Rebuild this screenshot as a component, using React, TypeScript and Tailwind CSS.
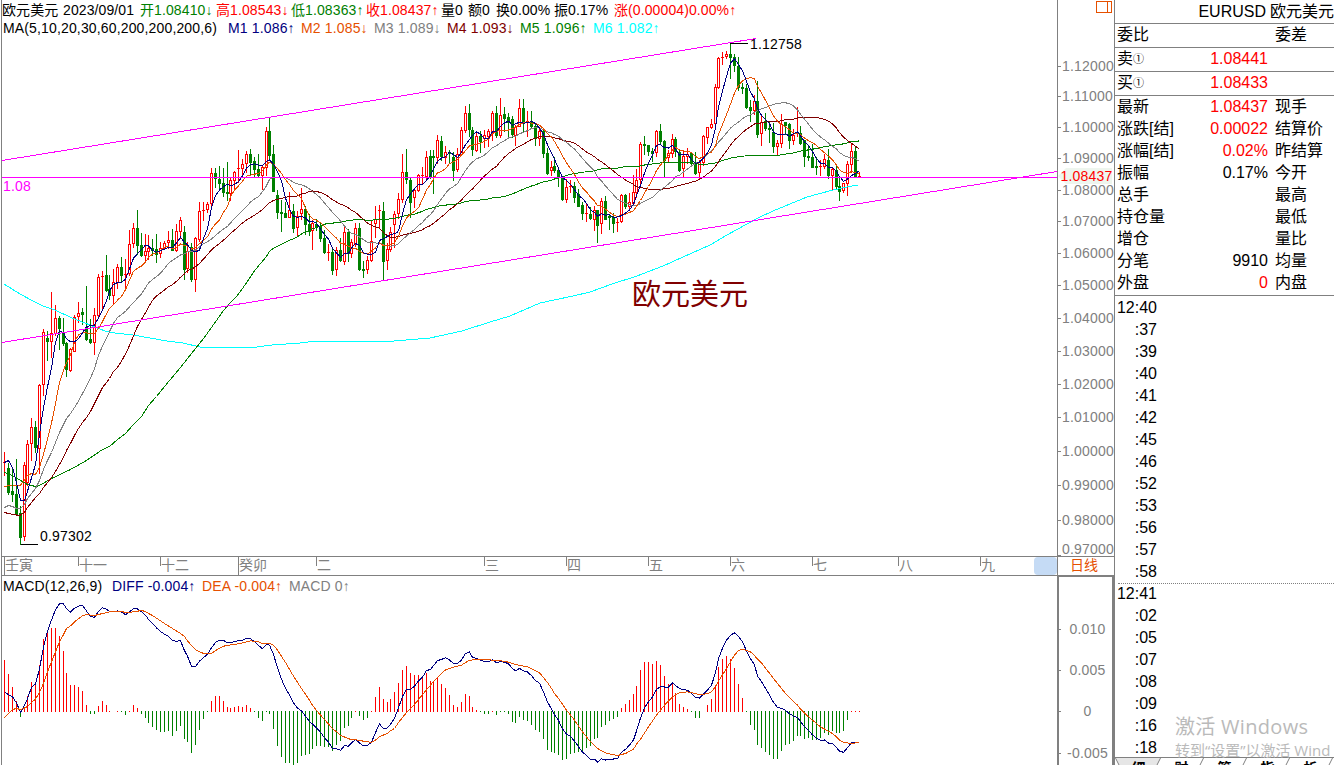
import React from 'react';

// [open, high, low, close] in chart rows, smaller = higher price
const CANDLES: number[][] = [
  [463,452,475,462],[468,463,494,492],[491,468,501,494],[494,459,514,514],[513,506,544,537],
  [536,462,540,465],[482,440,485,444],[443,418,460,427],[427,421,452,447],[448,384,473,385],
  [384,329,395,332],[338,331,360,341],[341,292,357,333],[333,305,335,318],[318,316,349,328],
  [332,318,345,343],[343,342,376,369],[370,348,371,349],[351,315,351,317],[316,302,322,313],
  [312,308,324,314],[327,286,340,339],[339,319,343,342],[342,308,354,315],[315,274,316,277],
  [277,271,309,276],[275,255,291,290],[289,275,299,295],[295,269,303,282],[282,264,288,267],
  [267,257,282,275],[275,259,287,274],[273,230,275,244],[243,223,247,228],[228,210,254,245],
  [245,233,256,255],[255,234,261,251],[251,235,259,248],[248,239,255,250],[249,234,262,254],
  [253,242,257,248],[248,241,249,243],[242,231,248,240],[240,229,250,250],[250,224,251,231],
  [231,217,238,220],[232,226,279,269],[268,242,272,251],[247,243,281,279],[279,237,291,238],
  [239,202,241,211],[211,202,220,210],[209,202,212,204],[203,168,205,173],[173,168,187,178],
  [179,166,188,183],[183,168,196,192],[192,162,200,193],[193,178,200,180],[180,171,188,172],
  [169,150,182,168],[168,159,177,164],[163,151,172,154],[154,149,174,162],[161,157,177,169],
  [169,154,177,175],[175,166,189,167],[167,127,175,131],[131,117,160,155],[154,145,191,191],
  [195,190,218,212],[212,200,231,213],[213,202,217,217],[217,192,217,210],[211,204,232,228],
  [227,211,235,216],[213,188,219,209],[209,206,234,224],[224,214,235,231],[230,220,249,223],
  [224,219,230,227],[226,222,241,238],[238,230,253,252],[253,244,260,252],[252,249,274,270],
  [269,247,275,250],[250,238,261,260],[261,225,264,232],[232,229,261,253],[253,239,257,242],
  [243,223,246,228],[228,223,270,269],[269,261,277,270],[269,256,273,260],[260,220,261,241],
  [223,206,237,219],[211,205,228,210],[211,202,280,261],[260,243,269,249],[249,227,251,232],
  [224,211,247,214],[213,193,218,199],[199,154,202,172],[172,149,183,179],[180,177,217,202],
  [197,189,207,190],[190,174,191,175],[176,167,183,175],[176,151,178,157],[156,150,178,177],
  [156,150,193,157],[157,135,163,140],[141,136,160,156],[157,146,163,152],[152,150,162,153],
  [157,152,180,170],[169,148,171,154],[154,127,155,130],[130,106,132,113],[113,104,136,129],
  [130,127,155,149],[150,133,151,136],[136,131,152,141],[138,130,147,135],[136,129,146,131],
  [132,111,140,113],[113,106,137,135],[135,98,137,115],[114,107,131,118],[117,113,138,122],
  [119,116,137,134],[135,125,145,127],[126,99,126,108],[108,99,131,122],[122,111,136,121],
  [121,111,127,126],[126,124,145,138],[138,128,145,131],[131,128,157,153],[153,148,174,173],
  [170,161,175,167],[166,157,172,170],[170,168,186,177],[177,176,200,199],[199,179,202,187],
  [187,180,192,186],[186,182,202,197],[194,189,206,206],[205,202,219,213],[214,204,221,213],
  [214,207,219,218],[219,206,230,210],[210,210,242,225],[223,198,233,201],[201,196,219,219],
  [216,214,229,217],[217,213,232,223],[223,218,231,222],[221,194,222,195],[195,194,208,206],
  [206,193,210,202],[203,175,204,192],[192,169,197,180],[179,142,183,144],[144,136,154,145],
  [145,145,155,151],[151,148,161,153],[152,130,156,131],[131,124,143,141],[141,140,176,160],
  [157,150,162,153],[153,134,157,139],[139,137,156,151],[152,149,171,170],[168,151,177,156],
  [156,148,163,154],[153,154,165,163],[164,152,174,173],[172,160,178,162],[162,135,165,136],
  [137,127,143,127],[127,119,128,124],[123,84,125,87],[87,57,88,58],[58,52,64,57],
  [56,51,58,54],[54,44,78,57],[57,54,71,65],[66,57,90,87],[87,83,93,88],
  [88,84,108,107],[107,100,121,110],[110,95,114,101],[101,81,137,134],[133,114,145,122],
  [121,113,130,128],[128,122,142,129],[132,123,152,146],[146,140,154,143],[143,114,147,124],
  [122,122,134,125],[124,123,148,140],[140,129,144,135],[134,107,136,133],[133,126,144,143],
  [140,140,166,156],[156,145,160,157],[157,144,167,167],[166,157,174,167],[167,160,175,166],
  [166,154,168,159],[160,149,178,175],[175,168,189,169],[170,165,189,186],[186,178,200,191],
  [190,183,192,183],[183,161,195,164],[164,144,172,151],[151,146,177,176],[177,172,177,176],
];

// moving averages; lead = the part that depends on history left of the screen
const AVERAGES: { n: number; color: string; lead: number[][] }[] = [
  { n: 60, color: '#008000', lead: [[0,472],[2,475],[4,480],[6,484],[8,486],[9,485],[12,478],[17,469],[21,460],[25,449],[27,446],[29,439],[31,433],[33,424],[35,416],[37,405],[39,396],[41,386],[45,367],[48,353],[51,338],[53,327],[56,310],[58,302]] },
  { n: 30, color: '#800000', lead: [[0,512],[1,513],[3,514.5],[4,514.5],[5,512],[6,507],[7,502],[8,497],[9,493],[10,487],[11,482],[12,477],[13,471],[14,464],[15,457],[16,450],[17,443],[18,435],[19,428],[20,422],[21,417],[22,411],[23,403],[24,395],[25,387],[26,382],[27,378],[28,371]] },
  { n: 20, color: '#808080', lead: [[0,507],[1,505],[2,506],[3,508],[4,508],[5,504],[6,498],[7,493],[8,488],[9,480],[10,469],[11,460],[12,452],[13,442],[14,432],[15,424],[16,418],[17,413],[18,407]] },
  { n: 10, color: '#e65000', lead: [[0,486],[2,484.5],[4,484.5],[5,480],[6,475],[7,473],[8,474]] },
  { n: 5, color: '#000080', lead: [[0,462],[1,460],[2,467],[3,482]] },
];

const MA200 = '4,284 20,294 33,301 43,306 55,310 72,318 85,323 95,327 105,331 115,333 133,335 150,338 167,341 183,343 200,347 257,347 272,345 300,343 316,341 394,341 430,338 462,331 490,322 510,316 540,303 573,296 590,292 612,284 637,276 663,266 683,257 710,245 727,235 747,224 760,217 773,211 790,204 807,197 833,190 847,187 858,185';

// histogram and DEA, three units per pixel row
const MACD = [
  157,113,76,33,-17,16,47,91,91,142,219,244,251,253,229,184,118,82,82,76,63,21,-10,-10,19,34,21,2,0,4,-4,-13,2,21,13,-8,
  -22,-35,-47,-58,-64,-64,-61,-74,-61,-44,-85,-92,-125,-101,-56,-25,-4,34,49,49,34,16,13,16,19,16,21,13,-2,-22,-31,-4,
  -10,-55,-106,-137,-155,-155,-161,-155,-134,-131,-128,-113,-104,-104,-109,-109,-121,-101,-91,-52,-44,-22,2,-15,-28,-22,2,
  46,76,40,31,40,61,88,126,139,116,110,112,104,116,94,94,102,85,73,52,21,16,31,55,49,16,7,-4,-10,-10,2,-13,-4,-4,-10,
  -32,-37,-19,-28,-31,-41,-58,-62,-85,-116,-124,-127,-131,-148,-143,-128,-125,-124,-122,-112,-106,-84,-82,-49,-43,-31,
  -25,-19,13,25,37,55,79,127,151,151,144,154,142,109,85,85,58,25,15,10,-3,-22,-22,0,22,40,82,136,159,169,160,133,85,43,
  -2,-41,-56,-101,-112,-122,-131,-143,-143,-119,-101,-98,-89,-74,-74,-83,-82,-88,-88,-82,-65,-71,-61,-65,-65,-59,-28,4,2,4,
];
const DEA = [
  [0,-19],[2,6],[3,9],[4,6],[6,15],[7,27],[8,37],[9,57],[10,84],[11,119],[12,149],[13,179],[14,209],[15,231],[16,249],
  [17,257],[18,269],[20,287],[21,291],[22,289],[23,288],[25,294],[27,299],[30,300],[31,297],[32,297],[35,303],[36,300],
  [38,288],[41,264],[45,234],[46,225],[49,185],[51,174],[53,174],[54,183],[56,196],[58,200],[60,203],[63,212],[65,209],
  [66,204],[68,204],[69,199],[70,184],[72,147],[74,106],[76,69],[78,34],[80,3],[82,-24],[84,-51],[86,-71],[88,-82],
  [90,-85],[94,-93],[95,-86],[96,-76],[98,-65],[100,-51],[101,-33],[103,-3],[105,21],[107,51],[109,79],[111,102],
  [113,125],[115,133],[117,139],[119,154],[122,156],[124,155],[127,152],[129,148],[131,141],[134,134],[137,116],[139,87],
  [140,69],[142,39],[144,4],[146,-26],[148,-61],[150,-91],[152,-111],[154,-124],[156,-130],[157,-132],[159,-126],
  [161,-113],[163,-83],[165,-46],[167,-11],[169,19],[171,43],[173,56],[175,59],[178,51],[180,53],[181,59],[183,91],
  [185,129],[187,169],[188,183],[189,187],[191,179],[194,146],[197,99],[200,54],[203,19],[206,-16],[209,-46],[212,-66],
  [214,-86],[215,-93],[217,-96],[219,-93],
];

const PRICES: [string, number][] = [
  ['1.12000', 66], ['1.11000', 96], ['1.10000', 127], ['1.09000', 158], ['1.08000', 190], ['1.07000', 221],
  ['1.06000', 253], ['1.05000', 285], ['1.04000', 318], ['1.03000', 351], ['1.02000', 384], ['1.01000', 417],
  ['1.00000', 451], ['0.99000', 485], ['0.98000', 520], ['0.97000', 549],
];

const MONTHS = [
  { label: '壬寅', w: 'w-[74px]', year: true },
  { label: '十一', w: 'w-[82px]' },
  { label: '十二', w: 'w-[78px]' },
  { label: '癸卯', w: 'w-[78px]', year: true },
  { label: '二', w: 'w-[168px]' },
  { label: '三', w: 'w-[82px]' },
  { label: '四', w: 'w-[82px]' },
  { label: '五', w: 'w-[82px]' },
  { label: '六', w: 'w-[82px]' },
  { label: '七', w: 'w-[86px]' },
  { label: '八', w: 'w-[82px]' },
  { label: '九', w: 'w-[54px]' },
];

const QUOTE = [
  { text: '欧元美元', cls: 'w-[61px]' },
  { text: '2023/09/01', cls: 'w-[77px]' },
  { text: '开1.08410↓', cls: 'w-[76px] text-[#008000]' },
  { text: '高1.08543↓', cls: 'w-[75px] text-[#ff0000]' },
  { text: '低1.08363↑', cls: 'w-[75px] text-[#008000]' },
  { text: '收1.08437↑', cls: 'w-[75px] text-[#ff0000]' },
  { text: '量0', cls: 'w-[27px]' },
  { text: '额0', cls: 'w-[28px]' },
  { text: '换0.00%', cls: 'w-[58px]' },
  { text: '振0.17%', cls: 'w-[60px]' },
  { text: '涨(0.00004)0.00%↑', cls: 'text-[#ff0000]' },
];

const MA_LABELS = [
  { text: 'MA(5,10,20,30,60,200,200,200,6)', cls: 'w-[225px]' },
  { text: 'M1 1.086↑', cls: 'w-[73px] text-[#000080]' },
  { text: 'M2 1.085↓', cls: 'w-[73px] text-[#e65000]' },
  { text: 'M3 1.089↓', cls: 'w-[73px] text-[#808080]' },
  { text: 'M4 1.093↓', cls: 'w-[73px] text-[#800000]' },
  { text: 'M5 1.096↑', cls: 'w-[73px] text-[#008000]' },
  { text: 'M6 1.082↑', cls: 'text-[#00ffff]' },
];

const MACD_LABELS = [
  { text: 'MACD(12,26,9)', cls: 'w-[109px]' },
  { text: 'DIFF -0.004↑', cls: 'w-[90px] text-[#000080]' },
  { text: 'DEA -0.004↑', cls: 'w-[87px] text-[#e65000]' },
  { text: 'MACD 0↑', cls: 'text-[#808080]' },
];

const DETAILS = [
  ['最新', '1.08437', '现手', 'text-[#ff0000]'],
  ['涨跌[结]', '0.00022', '结算价', 'text-[#ff0000]'],
  ['涨幅[结]', '0.02%', '昨结算', 'text-[#ff0000]'],
  ['振幅', '0.17%', '今开', 'text-black'],
  ['总手', '', '最高', 'text-black'],
  ['持仓量', '', '最低', 'text-black'],
  ['增仓', '', '量比', 'text-black'],
  ['分笔', '9910', '均量', 'text-black'],
  ['外盘', '0', '内盘', 'text-[#ff0000]'],
];

const TICKS_A = ['12:40', ':37', ':39', ':40', ':41', ':42', ':45', ':46', ':52', ':53', ':56', ':57', ':58'];
const TICKS_B = ['12:41', ':02', ':05', ':07', ':08', ':09', ':16', ':18'];

const barX = (i: number) => Math.floor(4.5 + i * 3.904);

const average = (n: number, lead: number[][]) => {
  const pts = lead.map(([i, y]) => `${barX(i) + 0.5},${y + 0.5}`);
  for (let i = n - 1; i < CANDLES.length; i++) {
    const sum = CANDLES.slice(i - n + 1, i + 1).reduce((s, c) => s + c[3], 0);
    pts.push(`${barX(i) + 0.5},${sum / n + 0.5}`);
  }
  return pts.join(' ');
};

const deaAt = (i: number) => {
  const k = Math.max(1, DEA.findIndex(([x]) => x >= i));
  const [x0, y0] = DEA[k - 1];
  const [x1, y1] = DEA[k];
  return y0 + ((y1 - y0) * (i - x0)) / (x1 - x0);
};

const macdLine = (value: (i: number) => number) =>
  MACD.map((_, i) => `${barX(i) + 0.5},${711.5 - value(i) / 3}`).join(' ');

const Labels: React.FC<{ items: { text: string; cls: string }[] }> = ({ items }) => (
  <>
    {items.map(({ text, cls }) => (
      <span key={text} className={`shrink-0 ${cls}`}>{text}</span>
    ))}
  </>
);

const Candle: React.FC<{ i: number; c: number[] }> = ({ i, c }) => {
  const [open, high, low, close] = c;
  const x = barX(i);
  const up = close < open;
  const top = Math.min(open, close);
  const h = Math.abs(open - close);
  return (
    <g>
      <rect x={x} y={high} width={1} height={low - high + 1} fill={up ? '#ff0000' : '#008000'} />
      <rect x={x - 1} y={top} width={3} height={Math.max(1, h + (up && h < 2 ? 0 : 1))} fill={up ? '#ff0000' : '#008000'} />
      {up && h > 1 && <rect x={x} y={top + 1} width={1} height={h - 1} fill="#ffffff" />}
    </g>
  );
};

const PriceChart: React.FC = () => (
  <svg width={1055} height={518} viewBox="2 38 1055 518" shapeRendering="crispEdges" className="block overflow-visible">
    {CANDLES.map((c, i) => <Candle key={i} i={i} c={c} />)}
    <polyline points={MA200} fill="none" stroke="#00ffff" />
    {AVERAGES.map(({ n, color, lead }) => (
      <polyline key={n} points={average(n, lead)} fill="none" stroke={color} />
    ))}
    <g stroke="#ff00ff">
      <path d="M2 160.5L756 38.5" />
      <path d="M2 342.5L1057 171.5" />
      <path d="M2 177.5H1057" />
    </g>
    <path d="M730 43.5H748M21 544.5H38" stroke="#000000" />
    <g fontSize={14} letterSpacing={0.2}>
      <text x={750} y={49}>1.12758</text>
      <text x={40} y={541}>0.97302</text>
      <text x={3} y={191} fill="#ff00ff">1.08</text>
    </g>
    <text x={632} y={305} fontSize={29} fill="#800000">欧元美元</text>
  </svg>
);

const PriceAxis: React.FC = () => (
  <svg width={56} height={556} viewBox="1058 0 56 556" className="block">
    <path d="M1096.5 1.5H1111.5V12.5H1096.5ZM1107.5 1.5V12.5" fill="none" stroke="#e65000" shapeRendering="crispEdges" />
    {PRICES.map(([label, y]) => (
      <g key={label}>
        <path d={`M1058 ${y === 549 ? 555.5 : y + 0.5}h3`} stroke="#808080" />
        <text x={1062} y={y + 5} fontSize={14} letterSpacing={0.2} fill="#808080">{label}</text>
      </g>
    ))}
    <path d="M1058 176L1066 168H1112V184H1066Z" fill="#eef5ee" />
    <text x={1060.5} y={181} fontSize={14} letterSpacing={0.2} fill="#ff0000">1.08437</text>
  </svg>
);

const MacdChart: React.FC = () => (
  <svg width={1055} height={169} viewBox="2 596 1055 169" shapeRendering="crispEdges" className="block">
    {MACD.map((v, i) => {
      const h = Math.round(Math.abs(v) / 3);
      return v !== 0 && (
        <rect key={i} x={barX(i)} y={v > 0 ? 712 - h : 711} width={1} height={Math.max(1, h)} fill={v > 0 ? '#ff0000' : '#008000'} />
      );
    })}
    <polyline points={macdLine((i) => deaAt(i) + MACD[i] / 2)} fill="none" stroke="#000080" />
    <polyline points={macdLine(deaAt)} fill="none" stroke="#e65000" />
  </svg>
);

const MacdAxis: React.FC = () => (
  <svg width={53} height={188} viewBox="1060 577 53 188" className="block">
    {([['0.010', 629], ['0.005', 670], ['0', 711], ['-0.005', 753]] as [string, number][]).map(([label, y]) => (
      <g key={label}>
        <path d={`M1060 ${y + 0.5}h2`} stroke="#808080" />
        <text x={1088.5} y={y + 5} fontSize={14} letterSpacing={0.2} fill="#808080" textAnchor="middle">{label}</text>
      </g>
    ))}
  </svg>
);

const QuotePanel: React.FC = () => (
  <aside className="relative flex w-[219px] flex-col overflow-hidden text-[16px] leading-[22px] whitespace-nowrap">
    <div className="flex h-6 shrink-0 items-center justify-end gap-1 border-b border-[#808080]">
      <span>EURUSD</span>
      <span>欧元美元</span>
    </div>
    <div className="flex h-6 shrink-0 items-center border-b border-[#808080] pb-0.5 pl-0.5">
      <span className="w-[158px]">委比</span>
      <span>委差</span>
    </div>
    {[['卖', '1.08441'], ['买', '1.08433']].map(([side, price]) => (
      <div key={side} className="flex h-6 shrink-0 items-center border-b border-[#808080] pb-0.5 pl-0.5">
        <span>{side}</span>
        <span className="w-8 text-[11px]">①</span>
        <span className="w-[103px] text-right text-[#ff0000]">{price}</span>
      </div>
    ))}
    <div className="flex h-[200px] shrink-0 flex-col border-b border-[#808080]">
      {DETAILS.map(([label, value, right, color]) => (
        <div key={label} className="flex h-[22px] items-center pl-0.5">
          <span className="w-[60px]">{label}</span>
          <span className={`w-[91px] text-right ${color}`}>{value}</span>
          <span className="pl-[7px]">{right}</span>
        </div>
      ))}
    </div>
    <ul className="flex h-[288px] w-[42px] shrink-0 flex-col items-end pt-px">
      {TICKS_A.map((t) => <li key={t}>{t}</li>)}
    </ul>
    <div className="-mt-px ml-[3px] shrink-0 border-t border-dotted border-[#808080]" />
    <ul className="-mt-px flex h-[174px] w-[42px] shrink-0 flex-col items-end">
      {TICKS_B.map((t) => <li key={t} className="shrink-0">{t}</li>)}
    </ul>
    <div className="relative h-2 shrink-0 overflow-hidden">
      <svg width={219} height={8} className="absolute inset-0">
        <path d="M1 0H46L42 8H4Z" fill="#e6e6e6" />
        <path d="M0 .5H219M0 0L4 8M46 0L42 8M89 0L85 8M132 0L128 8M175 0L171 8M218 0L214 8" fill="none" stroke="#808080" />
      </svg>
      <div className="relative flex pt-0.5 pl-0.5 text-[14px] leading-[18px] font-bold">
        {['细', '财', '管', '指', '析'].map((t) => (
          <span key={t} className="w-[43px] text-center">{t}</span>
        ))}
      </div>
    </div>
    <div className="absolute top-[713px] left-[60px] font-['Open_Sans','Noto_Sans_CJK_SC',sans-serif] text-[#bababa]">
      <p className="text-[20px] leading-[28px] tracking-[0.3px]">激活 Windows</p>
      <p className="text-[15px] leading-[18px]">转到“设置”以激活 Wind</p>
    </div>
  </aside>
);

export default function App() {
  return (
    <div className="flex h-[765px] w-[1334px] overflow-hidden bg-white font-['Liberation_Sans','Noto_Sans_CJK_SC',sans-serif] text-[14px] text-black">
      <main className="flex w-[1115px] shrink-0 flex-col border-r border-[#808080] whitespace-nowrap">
        <section className="flex h-[556px] shrink-0">
          <div className="ml-px w-[1056px] shrink-0 border-l border-[#808080]">
            <div className="flex h-5 items-center tracking-[0.1px]"><Labels items={QUOTE} /></div>
            <div className="flex h-[18px] items-center pb-0.5 pl-px leading-4 tracking-[0.15px]"><Labels items={MA_LABELS} /></div>
            <PriceChart />
          </div>
          <div className="w-[57px] shrink-0 border-l border-[#808080]"><PriceAxis /></div>
        </section>

        <section className="ml-px flex h-5 shrink-0 border border-r-0 border-[#808080] text-[#808080]">
          <div className="flex w-[1032px] shrink-0 pl-0.5">
            {MONTHS.map(({ label, w, year }) => (
              <div key={label} className={`flex shrink-0 ${w}`}>
                <span className={year ? 'h-[18px] w-px bg-[#808080]' : 'h-[9px] w-px bg-[#808080]'} />
                <span className="leading-[17px]">{label}</span>
              </div>
            ))}
          </div>
          <div className="w-[23px] shrink-0 rounded bg-[#c5dbf5]" />
          <div className="flex-1 border-l border-[#808080] pr-1 text-center leading-[17px] text-[#e65000]">日线</div>
        </section>

        <section className="flex h-[189px] shrink-0">
          <div className="ml-px w-[1056px] shrink-0 border-l border-[#808080]">
            <div className="flex h-5 items-center pl-px tracking-[0.15px]"><Labels items={MACD_LABELS} /></div>
            <MacdChart />
          </div>
          <div className="-mt-px w-[57px] shrink-0 border-2 border-b-0 border-[#808080]"><MacdAxis /></div>
        </section>
      </main>
      <QuotePanel />
    </div>
  );
}
